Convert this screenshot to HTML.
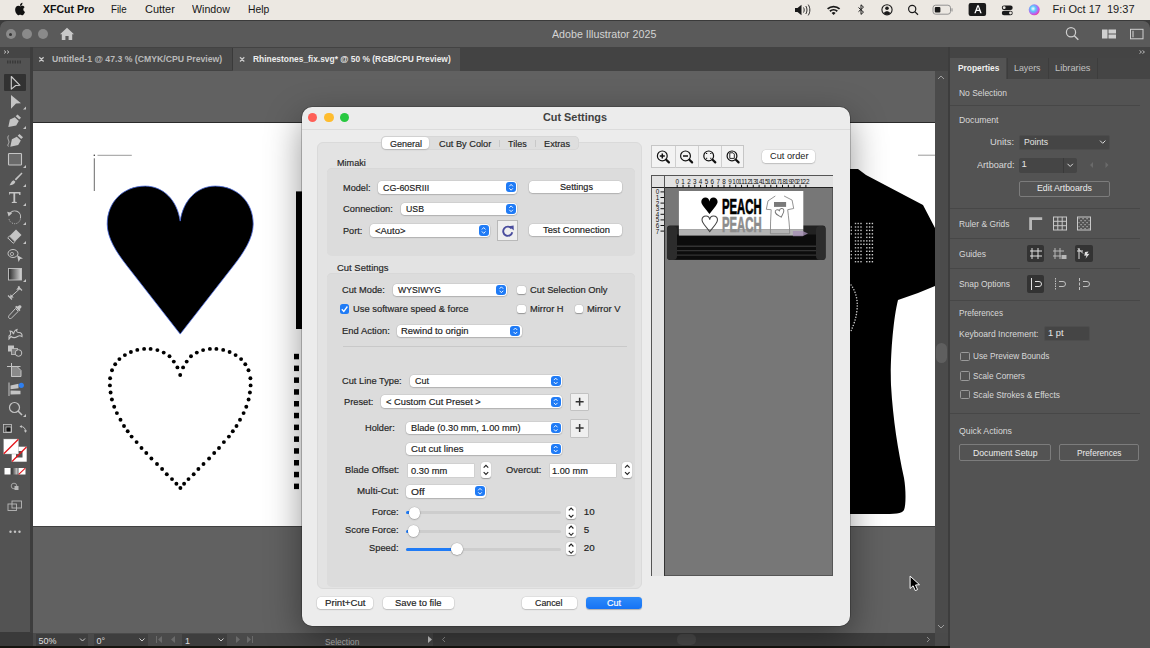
<!DOCTYPE html>
<html><head><meta charset="utf-8"><style>
.d{-webkit-text-stroke:.18px currentColor}
*{box-sizing:border-box;margin:0;padding:0}
html,body{width:1150px;height:648px;overflow:hidden;background:#3c3c3c;font-family:"Liberation Sans",sans-serif}
.a{position:absolute}
.t{position:absolute;white-space:nowrap}
svg{position:absolute;overflow:visible}
</style></head><body>
<div class="a" style="left:0px;top:0px;width:1150px;height:20px;background:#ece8e2"></div>
<svg style="left:15px;top:2.8px" width="11" height="12.6" viewBox="0 0 170 200"><path fill="#111" d="M150 68c-1 1-20 12-20 36 0 28 25 38 26 38 0 1-4 14-13 27-8 12-17 24-30 24s-17-8-32-8c-15 0-20 8-32 8s-21-12-30-25C8 152 0 126 0 102c0-39 25-60 50-60 13 0 24 9 32 9 8 0 20-9 35-9 6 0 26 1 33 26zM106 30c6-8 11-19 11-29 0-2 0-3-1-4-10 0-22 7-29 15-6 7-11 17-11 28 0 1 0 3 1 3 1 0 2 1 3 1 9 0 20-6 26-14z"/></svg>
<div class="t" style="left:42.7px;top:4.19px;font-size:11px;line-height:11px;color:#111;font-weight:bold;transform:scaleX(0.9577);transform-origin:0 0;">XFCut Pro</div>
<div class="t" style="left:111.3px;top:4.19px;font-size:11px;line-height:11px;color:#151515;transform:scaleX(0.8858);transform-origin:0 0;">File</div>
<div class="t" style="left:145px;top:4.19px;font-size:11px;line-height:11px;color:#151515;transform:scaleX(0.9949);transform-origin:0 0;">Cutter</div>
<div class="t" style="left:192.2px;top:4.19px;font-size:11px;line-height:11px;color:#151515;transform:scaleX(0.9662);transform-origin:0 0;">Window</div>
<div class="t" style="left:247.5px;top:4.19px;font-size:11px;line-height:11px;color:#151515;transform:scaleX(0.9371);transform-origin:0 0;">Help</div>
<div class="t" style="left:1052.6px;top:4.19px;font-size:11px;line-height:11px;color:#1a1a1a;white-space:pre;">Fri Oct 17  19:37</div>
<svg style="left:0;top:0" width="1150" height="20">
<g fill="#1a1a1a">
<path d="M795 8h2.5l4-3.2v10.4l-4-3.2H795z"/>
<path d="M803.5 7.5c.9 1.5.9 3.5 0 5M805.8 6c1.6 2.4 1.6 5.6 0 8M808.2 4.6c2.2 3.3 2.2 7.5 0 10.8" fill="none" stroke="#1a1a1a" stroke-width=".9"/>
<path d="M827 8.3a9.5 9.5 0 0 1 13.2 0l-1.2 1.3a7.8 7.8 0 0 0-10.8 0zM829.3 10.6a6.3 6.3 0 0 1 8.6 0l-1.2 1.3a4.6 4.6 0 0 0-6.2 0zM831.6 12.9a3 3 0 0 1 4 0l-2 2.1z"/>
<path d="M858.5 7.5l5 4.6-2.5 2.3V4.8l2.5 2.3-5 4.6" fill="none" stroke="#1a1a1a" stroke-width="1"/>
<circle cx="887" cy="9.8" r="5.1" fill="none" stroke="#1a1a1a" stroke-width="1.1"/>
<circle cx="887" cy="8.3" r="1.8"/>
<path d="M883.7 13.3c1-1.5 2-2 3.3-2s2.3.5 3.3 2c-1 .9-2 1.3-3.3 1.3s-2.3-.4-3.3-1.3z"/>
<circle cx="912.2" cy="9" r="3.6" fill="none" stroke="#1a1a1a" stroke-width="1.2"/>
<path d="M914.8 11.6l3.2 3.2" stroke="#1a1a1a" stroke-width="1.3"/>
<rect x="933" y="5.2" width="17.5" height="9" rx="2.6" fill="none" stroke="#888" stroke-width=".9"/>
<rect x="934.8" y="7" width="5.6" height="5.4" rx="1"/>
<path d="M952 8.3v3.2" stroke="#888" stroke-width="1"/>
<rect x="968.6" y="3" width="17.5" height="13" rx="2"/>
<path d="M1004 5.5h6.5a2.2 2.2 0 0 1 0 4.4h-6.5a2.2 2.2 0 0 1 0-4.4zM1004 10.8h6.5a2.2 2.2 0 0 1 0 4.4h-6.5a2.2 2.2 0 0 1 0-4.4z"/>
</g>
<g fill="#ece8e2"><circle cx="1004.2" cy="7.7" r="1.4"/><circle cx="1010.5" cy="13" r="1.4"/></g>
<path d="M974.3 13.3l3-8h1.4l3 8h-1.5l-.8-2.2h-2.9l-.8 2.2zM977 9.8h2.1l-1.05-3z" fill="#fff"/>
<defs><radialGradient id="siri" cx=".4" cy=".4" r=".7"><stop offset="0" stop-color="#fff"/><stop offset=".35" stop-color="#5ac8fa"/><stop offset=".7" stop-color="#bf5af2"/><stop offset="1" stop-color="#ff375f"/></radialGradient></defs>
<circle cx="1034.2" cy="9.8" r="5.5" fill="url(#siri)"/>
</svg>
<div class="a" style="left:0px;top:20px;width:1150px;height:628px;background:#3a3a3a;border-radius:7px 7px 0 0"></div>
<div class="a" style="left:0px;top:21px;width:1150px;height:26px;background:#5a5a5a;border-radius:7px 7px 0 0"></div>
<div class="a" style="left:5.9px;top:29.3px;width:10px;height:10px;border-radius:50%;background:#8a8a8a"></div>
<div class="a" style="left:22px;top:29.3px;width:10px;height:10px;border-radius:50%;background:#8a8a8a"></div>
<div class="a" style="left:37.9px;top:29.3px;width:10px;height:10px;border-radius:50%;background:#8a8a8a"></div>
<div class="a" style="left:9.4px;top:32.8px;width:3px;height:3px;border-radius:50%;background:#353535"></div>
<svg style="left:0;top:0" width="200" height="48"><path d="M60 34.2l7-6.5 7 6.5h-1.8v5.7h-3.6v-3.8h-3.2v3.8h-3.6v-5.7z" fill="#c8c8c8"/></svg>
<div class="t" style="left:551.9px;top:29.5px;font-size:10.4px;line-height:10.4px;color:#d4d4d4;transform:scaleX(1.0261);transform-origin:0 0;">Adobe Illustrator 2025</div>
<svg style="left:0;top:0" width="1150" height="48">
<circle cx="1071" cy="32.3" r="4.6" fill="none" stroke="#cfcfcf" stroke-width="1.2"/>
<path d="M1074.3 35.7l4 4" stroke="#cfcfcf" stroke-width="1.4"/>
<rect x="1102" y="29.5" width="5.5" height="9" fill="#cfcfcf"/>
<rect x="1108.5" y="29.5" width="7.5" height="4" fill="#cfcfcf"/>
<rect x="1108.5" y="34.5" width="7.5" height="4" fill="#cfcfcf"/>
<rect x="1130.5" y="29.3" width="12.5" height="9.5" fill="none" stroke="#cfcfcf" stroke-width="1"/>
<rect x="1132" y="30.8" width="2" height="6.5" fill="#9a9a9a"/>
</svg>
<div class="a" style="left:0px;top:47px;width:30px;height:11px;background:#454545"></div>
<div class="a" style="left:0px;top:58px;width:30px;height:574px;background:#535353"></div>
<div class="a" style="left:30px;top:47px;width:2.5px;height:586px;background:#3d3d3d"></div>
<svg style="left:0;top:0" width="32" height="648" viewBox="0 0 32 648">
<g fill="none" stroke="#4e4e4e"></g>
<!-- grip -->
<g fill="#3a3a3a"><rect x="7" y="60.5" width="1.5" height="3"/><rect x="9.5" y="60.5" width="1.5" height="3"/><rect x="12" y="60.5" width="1.5" height="3"/><rect x="14.5" y="60.5" width="1.5" height="3"/><rect x="17" y="60.5" width="1.5" height="3"/><rect x="19.5" y="60.5" width="1.5" height="3"/></g>
<path d="M4 50.5l2 1.5-2 1.5M7 50.5l2 1.5-2 1.5" stroke="#bdbdbd" stroke-width=".9" fill="none"/>
<rect x="4" y="74" width="22" height="17" rx="1" fill="#323232"/>
<path d="M11.3 76.5L20 85.3l-4.3.2-4.4 3.6z" fill="none" stroke="#cfcfcf" stroke-width="1.1" stroke-linejoin="round"/>
<g fill="#c4c4c4">
<path d="M11 95l10 8.2-5 .4-5 5.2z"/>
<path d="M26 106.5v3h-3z"/>
<!-- pen -->
<path d="M17.5 114.5l3.5 3.2-1.8 1.8-3.5-3.2z"/>
<path d="M14.8 117.2l4 3.7-2.6 4.7L8.3 127l1.6-7.5z"/>
<path d="M26 126v3h-3z"/>
<!-- curvature pen -->
<path d="M19.5 134l3.5 3.2-1.8 1.8-3.5-3.2z"/>
<path d="M16.8 136.7l4 3.7-2.6 4.7-7.9 1.6 1.6-7.5z"/>
<path d="M8.6 135.5c-2 3 .8 4.8.3 7-.3 1.7-1.8 2.5-.5 4" fill="none" stroke="#c4c4c4" stroke-width=".9"/>
<!-- rect -->
<rect x="8.5" y="153.5" width="13" height="11.5" rx=".8" fill="#6a6a6a" stroke="#c4c4c4" stroke-width="1.1"/>
<path d="M26 165v3h-3z"/>
<!-- brush -->
<path d="M21.5 172.5l1 1-6.5 7-1.3-1.2z"/>
<path d="M13.8 180.2l1.6 1.5c-.8 2.2-2.5 3.3-6 3.5 1.6-1.3 1.4-4 4.4-5z"/>
<path d="M26 184v3h-3z"/>
<!-- Type -->
<path d="M9 192h11.5v3h-1.2l-.5-1.6h-3.6v8.3l1.6.4v.9h-5v-.9l1.6-.4v-8.3h-3.6l-.5 1.6H9z"/>
<path d="M26 203v3h-3z"/>
<!-- rotate -->
<path d="M9.6 214.2A5.8 5.8 0 0 1 20.4 218.3" fill="none" stroke="#c4c4c4" stroke-width="1.1"/>
<path d="M20.3 219.5A5.8 5.8 0 0 1 9 218.8" fill="none" stroke="#c4c4c4" stroke-width="1" stroke-dasharray="1 1.3"/>
<path d="M7.2 211.8l5 1.2-3.6 3.6z"/>
<path d="M26 222v3h-3z"/>
<!-- eraser -->
<path d="M16 229.5l5.5 5.5-6.5 6.5-5.5-5.5z"/>
<path d="M9.5 236l5.5 5.5-1.8 1.8-5.5-5.5z" fill="none" stroke="#c4c4c4" stroke-width="1"/>
<path d="M26 241v3h-3z"/>
<!-- shape builder -->
<ellipse cx="13" cy="253.5" rx="5" ry="4" fill="none" stroke="#c4c4c4" stroke-width="1"/>
<circle cx="12" cy="254" r="1.6" fill="none" stroke="#c4c4c4" stroke-width=".8"/>
<path d="M17 255l6 3.5-2.8.6-1.7 3z"/>
<!-- gradient -->
<defs><linearGradient id="gr" x1="0" x2="1"><stop offset="0" stop-color="#2a2a2a"/><stop offset="1" stop-color="#d8d8d8"/></linearGradient></defs>
<rect x="8.5" y="268.5" width="13" height="11.5" fill="url(#gr)" stroke="#c4c4c4" stroke-width=".9"/>
<path d="M26 279v3h-3z"/>
<!-- width tool -->
<path d="M10 297.5l10-9" stroke="#c4c4c4" stroke-width="1" fill="none"/>
<path d="M8 295.5l4 4M18 286.5l4 4" stroke="#c4c4c4" stroke-width="1.1" fill="none"/>
<path d="M10.5 294.2l-.3 3.6 3.6-.3zM19.5 285.8l.3 3.6-3.6.3z"/>
<!-- eyedropper -->
<path d="M19 305.5c1.5-1 3.2.6 2.2 2.2l-1.5 1.5.8.8-1.2 1.2-4.2-4.2 1.2-1.2.8.8z"/>
<path d="M15.5 308.5l2.8 2.8-6.6 6.6c-.8.8-2 .9-2.7.2s-.6-1.9.2-2.7z" fill="none" stroke="#c4c4c4" stroke-width="1"/>
<!-- puppet warp -->
<path d="M9 336c2-1 2-3 1-5 2 0 3 1 3.5 3 .5-2 1-4 3.5-4.5-1 2 0 3 2 3 2 0 3.5 1.5 3 4-1.5-1-3-1-4.5 0-2 1.3-4.5 1.5-6.5 0-1 1-1.5 2-2 2.5z" fill="none" stroke="#c4c4c4" stroke-width="1.1"/>
<!-- blend -->
<rect x="8" y="345.5" width="6" height="6" />
<rect x="11.5" y="348.5" width="6" height="6" fill="#7a7a7a" stroke="#c4c4c4" stroke-width=".8"/>
<circle cx="18.5" cy="353" r="3.3" fill="#535353" stroke="#c4c4c4" stroke-width="1"/>
<!-- artboard -->
<path d="M11.5 363v13.5M7 366.5h13.5" stroke="#c4c4c4" stroke-width="1" fill="none"/>
<path d="M11.5 366.5h5.5l4 4v6H11.5z" fill="#8a8a8a" stroke="#c4c4c4" stroke-width="1"/>
<!-- graph -->
<path d="M9 382.5v13.5" stroke="#c4c4c4" stroke-width="1" fill="none"/>
<path d="M10.5 385.5l8-1.8v4.5l-8 1z M10.5 390.5l10 .3v3.5l-10 .3z"/>
<circle cx="21.3" cy="385.3" r="2.6" fill="#2e7ff0"/>
<!-- zoom -->
<circle cx="14.5" cy="407.5" r="5" fill="none" stroke="#c4c4c4" stroke-width="1.2"/>
<path d="M18 411l4 4" stroke="#c4c4c4" stroke-width="1.6"/>
<path d="M26 414v3h-3z"/>
<!-- swap small -->
<rect x="3.5" y="424.5" width="8" height="8" fill="none" stroke="#c4c4c4" stroke-width=".8"/>
<rect x="6" y="427" width="5" height="5" fill="#111" stroke="#e0e0e0" stroke-width=".6"/>
<path d="M20.5 426.5c3 0 5 1.5 5 5" fill="none" stroke="#c4c4c4" stroke-width="1"/>
<path d="M19.5 426.5l2.2-1.6v3.2zM25.5 432.8l-1.6-2.2h3.2z"/>
</g>
<!-- fill / stroke -->
<rect x="11.7" y="446.7" width="15" height="15" fill="#fff"/>
<rect x="16" y="451" width="6.5" height="6.5" fill="#555"/>
<path d="M12 461.5l14.5-14.5" stroke="#e4141a" stroke-width="1.3"/>
<rect x="3.6" y="439" width="15" height="15" fill="#fff" stroke="#9a9a9a" stroke-width=".4"/>
<path d="M3.8 453.8l14.6-14.6" stroke="#e4141a" stroke-width="1.3"/>
<rect x="4.5" y="468" width="6" height="6.5" fill="#fff"/>
<rect x="11.5" y="468" width="6" height="6.5" fill="url(#gr)"/>
<rect x="18.5" y="468" width="7" height="6.5" fill="#fff"/>
<path d="M18.7 474.3l6.6-6.2" stroke="#e4141a" stroke-width="1.1"/>
<g fill="#b8b8b8"><circle cx="14" cy="486" r="2.8" fill="none" stroke="#b8b8b8" stroke-width=".8"/><rect x="14.5" y="486" width="4" height="4"/></g>
<g fill="none" stroke="#b8b8b8" stroke-width=".9"><rect x="8" y="504" width="8.5" height="6.5"/><rect x="12" y="501" width="9.5" height="7"/></g>
<g fill="#c4c4c4"><circle cx="10.5" cy="531.8" r="1.2"/><circle cx="15" cy="531.8" r="1.2"/><circle cx="19.5" cy="531.8" r="1.2"/></g>
</svg>

<div class="a" style="left:32.5px;top:47px;width:916px;height:23.5px;background:#434343"></div>
<div class="a" style="left:33px;top:48px;width:199.5px;height:22px;background:#494949"></div>
<div class="a" style="left:232.4px;top:48px;width:1px;height:22px;background:#3a3a3a"></div>
<div class="a" style="left:233.4px;top:48px;width:226.2px;height:22.5px;background:#535353"></div>
<svg style="left:0;top:0" width="480" height="72"><path d="M39.3 57.2l4.3 4.3m0-4.3l-4.3 4.3M240 57.2l4.3 4.3m0-4.3l-4.3 4.3" stroke="#c8c8c8" stroke-width="1.25"/></svg>
<div class="t" style="left:51.7px;top:54.17px;font-size:9.6px;line-height:9.6px;color:#bababa;font-weight:bold;transform:scaleX(0.9056);transform-origin:0 0;">Untitled-1 @ 47.3 % (CMYK/CPU Preview)</div>
<div class="t" style="left:252.8px;top:54.17px;font-size:9.6px;line-height:9.6px;color:#ececec;font-weight:bold;transform:scaleX(0.8754);transform-origin:0 0;">Rhinestones_fix.svg* @ 50 % (RGB/CPU Preview)</div>
<div class="a" style="left:32.5px;top:70.5px;width:903px;height:1px;background:#3c3c3c"></div>
<div class="a" style="left:32.5px;top:71px;width:902.5px;height:562px;background:#616161"></div>
<div class="a" style="left:33px;top:121.8px;width:902px;height:1px;background:#2a2a2a"></div>
<div class="a" style="left:33px;top:122.8px;width:902px;height:402.9px;background:#ffffff"></div>
<div class="a" style="left:33px;top:525.7px;width:902px;height:1.8px;background:#404040"></div>
<div class="a" style="left:935px;top:70.5px;width:13px;height:562.5px;background:#4b4b4b"></div>
<svg style="left:0;top:0" width="1150" height="648"><path d="M938 79l3-3 3 3" fill="none" stroke="#aaa" stroke-width=".9"/><path d="M938 625l3 3 3-3" fill="none" stroke="#aaa" stroke-width=".9"/></svg>
<div class="a" style="left:936px;top:343.3px;width:11.3px;height:19.7px;background:#5f5f5f;border-radius:5.5px"></div>
<div class="a" style="left:948px;top:47px;width:2px;height:601px;background:#3d3d3d"></div>
<svg style="left:0;top:0" width="1150" height="648">
<path d="M97.5 155.3h34.3" stroke="#9a9a9a" stroke-width="1"/>
<path d="M94.3 158.3V191" stroke="#6a6a6a" stroke-width="1"/>
<circle cx="94.3" cy="155.3" r=".8" fill="#333"/>
<path d="M918 155.2h17" stroke="#9a9a9a" stroke-width="1"/>
<g transform="translate(107.2,186.1)">
<path d="M73 35C70 14 56 0 38 0C16 0 0 16 0 38C0 52 9.4 66.4 20 80L73 148L126 80C136.6 66.4 146 52 146 38C146 16 130 0 108 0C90 0 76 14 73 35Z" fill="#000" stroke="#4a6be0" stroke-width=".8"/>
</g>
<g fill="#000"><circle cx="180.2" cy="375.0" r="1.95"/><circle cx="177.4" cy="367.4" r="1.95"/><circle cx="173.8" cy="361.6" r="1.95"/><circle cx="169.5" cy="356.3" r="1.95"/><circle cx="163.7" cy="352.6" r="1.95"/><circle cx="157.4" cy="350.1" r="1.95"/><circle cx="150.6" cy="348.9" r="1.95"/><circle cx="144.1" cy="348.9" r="1.95"/><circle cx="137.3" cy="349.9" r="1.95"/><circle cx="130.9" cy="352.0" r="1.95"/><circle cx="124.9" cy="355.1" r="1.95"/><circle cx="119.4" cy="359.1" r="1.95"/><circle cx="115.2" cy="364.3" r="1.95"/><circle cx="112.0" cy="370.2" r="1.95"/><circle cx="110.1" cy="378.3" r="1.95"/><circle cx="109.9" cy="385.4" r="1.95"/><circle cx="110.6" cy="392.5" r="1.95"/><circle cx="111.9" cy="399.5" r="1.95"/><circle cx="114.2" cy="406.7" r="1.95"/><circle cx="116.9" cy="413.1" r="1.95"/><circle cx="120.5" cy="419.8" r="1.95"/><circle cx="124.0" cy="426.0" r="1.95"/><circle cx="127.7" cy="431.2" r="1.95"/><circle cx="131.6" cy="436.6" r="1.95"/><circle cx="136.6" cy="442.1" r="1.95"/><circle cx="141.5" cy="448.0" r="1.95"/><circle cx="146.3" cy="453.0" r="1.95"/><circle cx="151.4" cy="458.5" r="1.95"/><circle cx="157.0" cy="464.0" r="1.95"/><circle cx="162.1" cy="469.0" r="1.95"/><circle cx="166.8" cy="474.3" r="1.95"/><circle cx="172.0" cy="479.1" r="1.95"/><circle cx="176.4" cy="483.7" r="1.95"/><circle cx="180.4" cy="488.0" r="1.95"/><circle cx="183.1" cy="367.4" r="1.95"/><circle cx="186.7" cy="361.6" r="1.95"/><circle cx="191.0" cy="356.3" r="1.95"/><circle cx="196.8" cy="352.6" r="1.95"/><circle cx="203.1" cy="350.1" r="1.95"/><circle cx="209.9" cy="348.9" r="1.95"/><circle cx="216.4" cy="348.9" r="1.95"/><circle cx="223.2" cy="349.9" r="1.95"/><circle cx="229.6" cy="352.0" r="1.95"/><circle cx="235.6" cy="355.1" r="1.95"/><circle cx="241.1" cy="359.1" r="1.95"/><circle cx="245.3" cy="364.3" r="1.95"/><circle cx="248.5" cy="370.2" r="1.95"/><circle cx="250.4" cy="378.3" r="1.95"/><circle cx="250.6" cy="385.4" r="1.95"/><circle cx="249.9" cy="392.5" r="1.95"/><circle cx="248.6" cy="399.5" r="1.95"/><circle cx="246.3" cy="406.7" r="1.95"/><circle cx="243.6" cy="413.1" r="1.95"/><circle cx="240.0" cy="419.8" r="1.95"/><circle cx="236.5" cy="426.0" r="1.95"/><circle cx="232.8" cy="431.2" r="1.95"/><circle cx="228.9" cy="436.6" r="1.95"/><circle cx="223.9" cy="442.1" r="1.95"/><circle cx="219.0" cy="448.0" r="1.95"/><circle cx="214.2" cy="453.0" r="1.95"/><circle cx="209.1" cy="458.5" r="1.95"/><circle cx="203.5" cy="464.0" r="1.95"/><circle cx="198.4" cy="469.0" r="1.95"/><circle cx="193.7" cy="474.3" r="1.95"/><circle cx="188.5" cy="479.1" r="1.95"/><circle cx="184.1" cy="483.7" r="1.95"/></g>
<rect x="296" y="191.4" width="6" height="137.6" fill="#000"/>
<g fill="#000"><rect x="294" y="353.8" width="5" height="5.5"/><rect x="294" y="365.6" width="5" height="5.5"/><rect x="294" y="377.4" width="5" height="5.5"/><rect x="294" y="389.2" width="5" height="5.5"/><rect x="294" y="401.0" width="5" height="5.5"/><rect x="294" y="412.8" width="5" height="5.5"/><rect x="294" y="424.6" width="5" height="5.5"/><rect x="294" y="436.4" width="5" height="5.5"/><rect x="294" y="448.2" width="5" height="5.5"/><rect x="294" y="460.0" width="5" height="5.5"/><rect x="294" y="471.8" width="5" height="5.5"/><rect x="294" y="483.6" width="5" height="5.5"/></g>
<path d="M850 169L858 169L866 175L923 205L935 228L935 286L918 293L898 300C893 320 890 360 891 385C893 420 898 450 904 478C906 490 906 505 904 510C902 514 895 514 880 514L850 514Z" fill="#000"/>
</svg>
<svg style="left:0;top:0" width="1150" height="648"><g fill="#ddd"><rect x="854.8" y="222.8" width="1.4" height="1.4"/><rect x="857.5" y="222.8" width="1.4" height="1.4"/><rect x="860.3" y="222.8" width="1.4" height="1.4"/><rect x="866.1" y="222.8" width="1.4" height="1.4"/><rect x="868.9" y="222.8" width="1.4" height="1.4"/><rect x="871.7" y="222.8" width="1.4" height="1.4"/><rect x="854.8" y="226.3" width="1.4" height="1.4"/><rect x="857.5" y="226.3" width="1.4" height="1.4"/><rect x="860.3" y="226.3" width="1.4" height="1.4"/><rect x="866.1" y="226.3" width="1.4" height="1.4"/><rect x="868.9" y="226.3" width="1.4" height="1.4"/><rect x="871.7" y="226.3" width="1.4" height="1.4"/><rect x="850.6" y="226.3" width="1.4" height="1.4"/><rect x="854.8" y="229.7" width="1.4" height="1.4"/><rect x="857.5" y="229.7" width="1.4" height="1.4"/><rect x="860.3" y="229.7" width="1.4" height="1.4"/><rect x="866.1" y="229.7" width="1.4" height="1.4"/><rect x="868.9" y="229.7" width="1.4" height="1.4"/><rect x="871.7" y="229.7" width="1.4" height="1.4"/><rect x="850.6" y="229.7" width="1.4" height="1.4"/><rect x="854.8" y="233.2" width="1.4" height="1.4"/><rect x="857.5" y="233.2" width="1.4" height="1.4"/><rect x="860.3" y="233.2" width="1.4" height="1.4"/><rect x="866.1" y="233.2" width="1.4" height="1.4"/><rect x="868.9" y="233.2" width="1.4" height="1.4"/><rect x="871.7" y="233.2" width="1.4" height="1.4"/><rect x="850.6" y="233.2" width="1.4" height="1.4"/><rect x="854.8" y="236.7" width="1.4" height="1.4"/><rect x="857.5" y="236.7" width="1.4" height="1.4"/><rect x="860.3" y="236.7" width="1.4" height="1.4"/><rect x="866.1" y="236.7" width="1.4" height="1.4"/><rect x="868.9" y="236.7" width="1.4" height="1.4"/><rect x="871.7" y="236.7" width="1.4" height="1.4"/><rect x="854.8" y="240.2" width="1.4" height="1.4"/><rect x="857.5" y="240.2" width="1.4" height="1.4"/><rect x="860.3" y="240.2" width="1.4" height="1.4"/><rect x="866.1" y="240.2" width="1.4" height="1.4"/><rect x="868.9" y="240.2" width="1.4" height="1.4"/><rect x="871.7" y="240.2" width="1.4" height="1.4"/><rect x="863.2" y="240.2" width="1.4" height="1.4"/><rect x="854.8" y="243.6" width="1.4" height="1.4"/><rect x="857.5" y="243.6" width="1.4" height="1.4"/><rect x="860.3" y="243.6" width="1.4" height="1.4"/><rect x="866.1" y="243.6" width="1.4" height="1.4"/><rect x="868.9" y="243.6" width="1.4" height="1.4"/><rect x="871.7" y="243.6" width="1.4" height="1.4"/><rect x="863.2" y="243.6" width="1.4" height="1.4"/><rect x="854.8" y="247.1" width="1.4" height="1.4"/><rect x="857.5" y="247.1" width="1.4" height="1.4"/><rect x="860.3" y="247.1" width="1.4" height="1.4"/><rect x="866.1" y="247.1" width="1.4" height="1.4"/><rect x="868.9" y="247.1" width="1.4" height="1.4"/><rect x="871.7" y="247.1" width="1.4" height="1.4"/><rect x="854.8" y="250.6" width="1.4" height="1.4"/><rect x="857.5" y="250.6" width="1.4" height="1.4"/><rect x="860.3" y="250.6" width="1.4" height="1.4"/><rect x="866.1" y="250.6" width="1.4" height="1.4"/><rect x="868.9" y="250.6" width="1.4" height="1.4"/><rect x="871.7" y="250.6" width="1.4" height="1.4"/><rect x="850.6" y="250.6" width="1.4" height="1.4"/><rect x="854.8" y="254.0" width="1.4" height="1.4"/><rect x="857.5" y="254.0" width="1.4" height="1.4"/><rect x="860.3" y="254.0" width="1.4" height="1.4"/><rect x="866.1" y="254.0" width="1.4" height="1.4"/><rect x="868.9" y="254.0" width="1.4" height="1.4"/><rect x="871.7" y="254.0" width="1.4" height="1.4"/><rect x="850.6" y="254.0" width="1.4" height="1.4"/><rect x="854.8" y="257.5" width="1.4" height="1.4"/><rect x="857.5" y="257.5" width="1.4" height="1.4"/><rect x="860.3" y="257.5" width="1.4" height="1.4"/><rect x="866.1" y="257.5" width="1.4" height="1.4"/><rect x="868.9" y="257.5" width="1.4" height="1.4"/><rect x="871.7" y="257.5" width="1.4" height="1.4"/><rect x="850.6" y="257.5" width="1.4" height="1.4"/><rect x="854.8" y="261.0" width="1.4" height="1.4"/><rect x="857.5" y="261.0" width="1.4" height="1.4"/><rect x="860.3" y="261.0" width="1.4" height="1.4"/><rect x="866.1" y="261.0" width="1.4" height="1.4"/><rect x="868.9" y="261.0" width="1.4" height="1.4"/><rect x="871.7" y="261.0" width="1.4" height="1.4"/></g><path d="M851 285C856 292 858 300 857 310C856 320 853 326 851 331" fill="none" stroke="#eee" stroke-width="1.6" stroke-dasharray="0 2.8" stroke-linecap="round"/></svg>
<div class="a" style="left:32.5px;top:633px;width:903px;height:13px;background:#4a4a4a"></div>
<div class="a" style="left:36px;top:634px;width:40px;height:11.5px;background:#3e3e3e"></div>
<div class="a" style="left:76px;top:634px;width:12px;height:11.5px;background:#3e3e3e"></div>
<div class="a" style="left:94px;top:634px;width:40px;height:11.5px;background:#3e3e3e"></div>
<div class="a" style="left:134px;top:634px;width:14px;height:11.5px;background:#3e3e3e"></div>
<div class="a" style="left:182px;top:634px;width:33px;height:11.5px;background:#3e3e3e"></div>
<div class="a" style="left:215px;top:634px;width:12px;height:11.5px;background:#3e3e3e"></div>
<div class="a" style="left:433px;top:633px;width:502px;height:13px;background:#3f3f3f"></div>
<div class="a" style="left:677px;top:634px;width:19.4px;height:10.6px;background:#4e4e4e;border-radius:5px"></div>
<div class="a" style="left:935px;top:633px;width:13px;height:13px;background:#4a4a4a"></div>
<div class="t" style="left:38.5px;top:636.88px;font-size:9px;line-height:9px;color:#dedede;">50%</div>
<div class="t" style="left:96.5px;top:636.88px;font-size:9px;line-height:9px;color:#dedede;">0°</div>
<div class="t" style="left:185px;top:636.88px;font-size:9px;line-height:9px;color:#dedede;">1</div>
<div class="t" style="left:324.6px;top:636.54px;font-size:9.4px;line-height:9.4px;color:#b8b8b8;transform:scaleX(0.8896);transform-origin:0 0;">Selection</div>
<svg style="left:0;top:0" width="1150" height="648"><g fill="none" stroke="#cfcfcf" stroke-width="1">
<path d="M80 638.5l2.5 2.5 2.5-2.5M139.5 638.5l2.5 2.5 2.5-2.5M218.5 638.5l2.5 2.5 2.5-2.5"/></g>
<g fill="#6a6a6a"><rect x="156" y="636" width="1" height="7"/><path d="M162 636v7l-4-3.5zM175 636v7l-4-3.5zM236 636v7l4-3.5zM247 636v7l4-3.5"/><rect x="252" y="636" width="1" height="7"/></g>
<path d="M428 636v7l4-3.5z" fill="#cfcfcf"/>
<path d="M445 637l-2.5 2.5 2.5 2.5M927 637l2.5 2.5-2.5 2.5" fill="none" stroke="#999" stroke-width=".9"/>
</svg>
<div class="a" style="left:0px;top:645.5px;width:1150px;height:2.5px;background:#15140f"></div>
<div class="a" style="left:950px;top:47px;width:199.5px;height:11px;background:#444444"></div>
<div class="a" style="left:950px;top:58px;width:199.5px;height:590px;background:#535353"></div>
<div class="a" style="left:950px;top:58px;width:199.5px;height:21px;background:#454545"></div>
<div class="a" style="left:950px;top:58px;width:56px;height:21px;background:#535353"></div>
<div class="a" style="left:1006.5px;top:58px;width:1px;height:21px;background:#3d3d3d"></div>
<div class="a" style="left:1047.8px;top:58px;width:1px;height:21px;background:#3d3d3d"></div>
<div class="a" style="left:1097.4px;top:58px;width:1px;height:21px;background:#3d3d3d"></div>
<svg style="left:0;top:0" width="1150" height="60"><path d="M1139.5 50.5l2 1.5-2 1.5M1142.5 50.5l2 1.5-2 1.5" stroke="#bdbdbd" stroke-width=".9" fill="none"/></svg>
<div class="t" style="left:957.8px;top:62.8px;font-size:9.8px;line-height:9.8px;color:#efefef;font-weight:bold;transform:scaleX(0.8541);transform-origin:0 0;">Properties</div>
<div class="t" style="left:1013.5px;top:62.8px;font-size:9.8px;line-height:9.8px;color:#c0c0c0;transform:scaleX(0.9010);transform-origin:0 0;">Layers</div>
<div class="t" style="left:1055px;top:62.8px;font-size:9.8px;line-height:9.8px;color:#c0c0c0;transform:scaleX(0.9447);transform-origin:0 0;">Libraries</div>
<div class="t" style="left:958.5px;top:87.7px;font-size:9.8px;line-height:9.8px;color:#d8d8d8;transform:scaleX(0.8639);transform-origin:0 0;">No Selection</div>
<div class="a" style="left:950px;top:105px;width:190px;height:1px;background:#474747"></div>
<div class="t" style="left:958.5px;top:114.9px;font-size:9.8px;line-height:9.8px;color:#d8d8d8;transform:scaleX(0.8844);transform-origin:0 0;">Document</div>
<div class="t" style="left:990px;top:137px;font-size:9.8px;line-height:9.8px;color:#d8d8d8;transform:scaleX(0.9581);transform-origin:0 0;">Units:</div>
<div class="a" style="left:1018.8px;top:134.8px;width:91.1px;height:14.8px;background:#454545;border:1px solid #4c4c4c;border-radius:2px"></div>
<div class="t" style="left:1024px;top:137px;font-size:9.8px;line-height:9.8px;color:#e4e4e4;transform:scaleX(0.8812);transform-origin:0 0;">Points</div>
<div class="t" style="left:976.5px;top:159.8px;font-size:9.8px;line-height:9.8px;color:#d8d8d8;transform:scaleX(0.9304);transform-origin:0 0;">Artboard:</div>
<div class="a" style="left:1018.8px;top:158px;width:44px;height:14.8px;background:#454545;border-radius:2px 0 0 2px"></div>
<div class="a" style="left:1063px;top:158px;width:14.4px;height:14.8px;background:#454545;border-left:1px solid #3a3a3a;border-radius:0 2px 2px 0"></div>
<div class="t" style="left:1021.5px;top:159.26px;font-size:9.5px;line-height:9.5px;color:#e4e4e4;">1</div>
<div class="a" style="left:1018.8px;top:180.5px;width:91.1px;height:16.1px;border:1px solid #7c7c7c;border-radius:2px"></div>
<div class="t" style="left:1036.5px;top:183.3px;font-size:9.8px;line-height:9.8px;color:#ececec;transform:scaleX(0.8935);transform-origin:0 0;">Edit Artboards</div>
<svg style="left:0;top:0" width="1150" height="648">
<g fill="none" stroke="#dcdcdc" stroke-width="1">
<path d="M1100 140.6l2.7 2.7 2.7-2.7M1067.5 163.8l2.7 2.7 2.7-2.7"/>
</g>
<g fill="#6a6a6a"><path d="M1093 162v6l-3-3zM1105.5 162v6l3-3z"/></g>
</svg>
<div class="a" style="left:950px;top:208.3px;width:190px;height:1px;background:#474747"></div>
<div class="t" style="left:958.5px;top:218.5px;font-size:9.8px;line-height:9.8px;color:#d8d8d8;transform:scaleX(0.8587);transform-origin:0 0;">Ruler &amp; Grids</div>
<svg style="left:0;top:0" width="1150" height="648">
<g fill="none" stroke="#c8c8c8" stroke-width="1">

<rect x="1053.5" y="217" width="13" height="13"/><path d="M1057.8 217v13M1062.2 217v13M1053.5 221.3h13M1053.5 225.7h13"/>
<rect x="1077.5" y="217" width="13" height="13"/>
</g>
<g fill="#9a9a9a"><path fill="#b8b8b8" d="M1029.2 217.3h13v2.8h-10.2v9.8h-2.8z"/><rect x="1078.5" y="218.0" width="1.2" height="1.2"/><rect x="1080.5" y="220.0" width="1.2" height="1.2"/><rect x="1078.5" y="222.0" width="1.2" height="1.2"/><rect x="1080.5" y="224.0" width="1.2" height="1.2"/><rect x="1078.5" y="226.0" width="1.2" height="1.2"/><rect x="1080.5" y="228.0" width="1.2" height="1.2"/><rect x="1082.5" y="218.0" width="1.2" height="1.2"/><rect x="1080.5" y="220.0" width="1.2" height="1.2"/><rect x="1082.5" y="222.0" width="1.2" height="1.2"/><rect x="1080.5" y="224.0" width="1.2" height="1.2"/><rect x="1082.5" y="226.0" width="1.2" height="1.2"/><rect x="1080.5" y="228.0" width="1.2" height="1.2"/><rect x="1082.5" y="218.0" width="1.2" height="1.2"/><rect x="1084.5" y="220.0" width="1.2" height="1.2"/><rect x="1082.5" y="222.0" width="1.2" height="1.2"/><rect x="1084.5" y="224.0" width="1.2" height="1.2"/><rect x="1082.5" y="226.0" width="1.2" height="1.2"/><rect x="1084.5" y="228.0" width="1.2" height="1.2"/><rect x="1086.5" y="218.0" width="1.2" height="1.2"/><rect x="1084.5" y="220.0" width="1.2" height="1.2"/><rect x="1086.5" y="222.0" width="1.2" height="1.2"/><rect x="1084.5" y="224.0" width="1.2" height="1.2"/><rect x="1086.5" y="226.0" width="1.2" height="1.2"/><rect x="1084.5" y="228.0" width="1.2" height="1.2"/><rect x="1086.5" y="218.0" width="1.2" height="1.2"/><rect x="1088.5" y="220.0" width="1.2" height="1.2"/><rect x="1086.5" y="222.0" width="1.2" height="1.2"/><rect x="1088.5" y="224.0" width="1.2" height="1.2"/><rect x="1086.5" y="226.0" width="1.2" height="1.2"/><rect x="1088.5" y="228.0" width="1.2" height="1.2"/></g>
</svg>
<div class="a" style="left:950px;top:238px;width:190px;height:1px;background:#474747"></div>
<div class="t" style="left:958.5px;top:248.5px;font-size:9.8px;line-height:9.8px;color:#d8d8d8;transform:scaleX(0.8696);transform-origin:0 0;">Guides</div>
<div class="a" style="left:1027px;top:244.8px;width:17.4px;height:17.4px;background:#333;border-radius:2px"></div>
<div class="a" style="left:1075px;top:244.8px;width:17.6px;height:17.4px;background:#333;border-radius:2px"></div>
<svg style="left:0;top:0" width="1150" height="648">
<g fill="none" stroke="#e0e0e0" stroke-width="1">
<path d="M1032 248v11M1038 248v11M1030 251h12M1030 256h12"/>
<path d="M1055 248v11M1060 248v11M1053 251h11M1053 256h8" stroke="#b8b8b8"/>
<path d="M1079 248v11M1077 251h6M1078 248.5l5 5"/>
</g>
<rect x="1061.5" y="255" width="5" height="4" fill="#b8b8b8"/>
<path d="M1085 252l3.5-.5-1.5 2.5 2.5-.3-4 5 1-3.2-2.2.3z" fill="#e0e0e0"/>
</svg>
<div class="a" style="left:950px;top:268px;width:190px;height:1px;background:#474747"></div>
<div class="t" style="left:958.5px;top:279px;font-size:9.8px;line-height:9.8px;color:#d8d8d8;transform:scaleX(0.8589);transform-origin:0 0;">Snap Options</div>
<div class="a" style="left:1027px;top:275px;width:17.4px;height:18px;background:#333;border-radius:2px"></div>
<svg style="left:0;top:0" width="1150" height="648">
<g fill="none" stroke="#e0e0e0" stroke-width="1">
<path d="M1031.5 278v12"/><path d="M1035 281.5h4a2.5 2.5 0 0 1 0 5h-4"/>
<path d="M1055.5 278v12" stroke="#c0c0c0" stroke-dasharray="1.5 1"/><path d="M1059 281.5h4a2.5 2.5 0 0 1 0 5h-4" stroke="#c0c0c0"/>
<path d="M1079.5 278v12" stroke="#c0c0c0" stroke-dasharray="3 1.5"/><path d="M1083 281.5h4a2.5 2.5 0 0 1 0 5h-4" stroke="#c0c0c0"/>
</g>
</svg>
<div class="a" style="left:950px;top:299.6px;width:190px;height:1px;background:#474747"></div>
<div class="t" style="left:958.5px;top:308px;font-size:9.8px;line-height:9.8px;color:#d8d8d8;transform:scaleX(0.8328);transform-origin:0 0;">Preferences</div>
<div class="t" style="left:958.5px;top:329px;font-size:9.8px;line-height:9.8px;color:#d8d8d8;transform:scaleX(0.8740);transform-origin:0 0;">Keyboard Increment:</div>
<div class="a" style="left:1043.7px;top:325.5px;width:46.7px;height:15.5px;background:#454545;border:1px solid #4d4d4d;border-radius:2px"></div>
<div class="t" style="left:1047.5px;top:328.26px;font-size:9.5px;line-height:9.5px;color:#e8e8e8;transform:scaleX(0.9783);transform-origin:0 0;">1 pt</div>
<div class="a" style="left:960.4px;top:351.7px;width:9.2px;height:9.2px;border:1px solid #9a9a9a;border-radius:1.5px"></div>
<div class="t" style="left:972.6px;top:351.3px;font-size:9.8px;line-height:9.8px;color:#d8d8d8;transform:scaleX(0.8399);transform-origin:0 0;">Use Preview Bounds</div>
<div class="a" style="left:960.4px;top:371.4px;width:9.2px;height:9.2px;border:1px solid #9a9a9a;border-radius:1.5px"></div>
<div class="t" style="left:972.6px;top:371px;font-size:9.8px;line-height:9.8px;color:#d8d8d8;transform:scaleX(0.8359);transform-origin:0 0;">Scale Corners</div>
<div class="a" style="left:960.4px;top:390.2px;width:9.2px;height:9.2px;border:1px solid #9a9a9a;border-radius:1.5px"></div>
<div class="t" style="left:972.6px;top:389.8px;font-size:9.8px;line-height:9.8px;color:#d8d8d8;transform:scaleX(0.8502);transform-origin:0 0;">Scale Strokes &amp; Effects</div>
<div class="a" style="left:950px;top:412.6px;width:190px;height:1px;background:#474747"></div>
<div class="t" style="left:958.5px;top:426px;font-size:9.8px;line-height:9.8px;color:#d8d8d8;transform:scaleX(0.8927);transform-origin:0 0;">Quick Actions</div>
<div class="a" style="left:958.5px;top:444px;width:92.5px;height:16.7px;border:1px solid #7c7c7c;border-radius:2px"></div>
<div class="a" style="left:1059px;top:444px;width:80px;height:16.7px;border:1px solid #7c7c7c;border-radius:2px"></div>
<div class="t" style="left:972.5px;top:447.5px;font-size:9.8px;line-height:9.8px;color:#ececec;transform:scaleX(0.8836);transform-origin:0 0;">Document Setup</div>
<div class="t" style="left:1077px;top:447.5px;font-size:9.8px;line-height:9.8px;color:#ececec;transform:scaleX(0.8423);transform-origin:0 0;">Preferences</div>
<div class="a" style="left:302px;top:106.5px;width:548px;height:519.5px;background:#ececec;border-radius:10px;box-shadow:0 0 0 .6px rgba(0,0,0,.35),0 12px 36px rgba(0,0,0,.42)"></div>
<div class="a" style="left:302px;top:129px;width:548px;height:1px;background:#dcdcdc"></div>
<div class="a" style="left:307.6px;top:112.6px;width:9.8px;height:9.8px;border-radius:50%;background:#fe5f57"></div>
<div class="a" style="left:323.8px;top:112.6px;width:9.8px;height:9.8px;border-radius:50%;background:#febc2e"></div>
<div class="a" style="left:339.6px;top:112.6px;width:9.8px;height:9.8px;border-radius:50%;background:#28c840"></div>
<div class="t" style="left:543.2px;top:112.43px;font-size:10.6px;line-height:10.6px;color:#404040;font-weight:bold;transform:scaleX(1.0254);transform-origin:0 0;">Cut Settings</div>
<div class="a" style="left:317px;top:142px;width:324.6px;height:447.4px;background:#e3e3e3;border:1px solid #dadada;border-radius:6px"></div>
<div class="a" style="left:380.5px;top:135.8px;width:198.2px;height:14.1px;background:#dedede;border-radius:5px;box-shadow:inset 0 0 0 .5px #d0d0d0"></div>
<div class="a" style="left:381.7px;top:136.5px;width:47.5px;height:12.6px;background:#fff;border-radius:4px;box-shadow:0 .5px 1.5px rgba(0,0,0,.25)"></div>
<div class="a" style="left:499.3px;top:139.5px;width:0.8px;height:7px;background:#c8c8c8"></div>
<div class="a" style="left:535.4px;top:139.5px;width:0.8px;height:7px;background:#c8c8c8"></div>
<div class="t d" style="left:389.5px;top:139.2px;font-size:9.8px;line-height:9.8px;color:#262626;transform:scaleX(0.9208);transform-origin:0 0;">General</div>
<div class="t d" style="left:438.7px;top:139.2px;font-size:9.8px;line-height:9.8px;color:#262626;transform:scaleX(0.9415);transform-origin:0 0;">Cut By Color</div>
<div class="t d" style="left:508.3px;top:139.2px;font-size:9.8px;line-height:9.8px;color:#262626;transform:scaleX(0.9199);transform-origin:0 0;">Tiles</div>
<div class="t d" style="left:543.6px;top:139.2px;font-size:9.8px;line-height:9.8px;color:#262626;transform:scaleX(0.9398);transform-origin:0 0;">Extras</div>
<div class="t d" style="left:336.7px;top:158.1px;font-size:9.8px;line-height:9.8px;color:#262626;transform:scaleX(0.9281);transform-origin:0 0;">Mimaki</div>
<div class="a" style="left:327.3px;top:168.2px;width:307.8px;height:88px;background:#dcdcdc;border-radius:5px;box-shadow:inset 0 .5px 0 #d4d4d4"></div>
<div class="t d" style="left:342.7px;top:182.8px;font-size:9.8px;line-height:9.8px;color:#262626;transform:scaleX(0.9350);transform-origin:0 0;">Model:</div>
<div class="a" style="left:377.9px;top:180.9px;width:139.3px;height:12.8px;background:#fff;border-radius:3.5px;box-shadow:0 .5px 1.2px rgba(0,0,0,.3),0 0 0 .3px rgba(0,0,0,.12)"></div>
<div class="a" style="left:506px;top:182.1px;width:10.2px;height:10.4px;background:#1f7bf6;border-radius:3px"></div>
<svg style="left:0;top:0" width="1150" height="648"><path d="M509.30 186.30l1.8-1.9 1.8 1.9M509.30 188.30l1.8 1.9 1.8-1.9" fill="none" stroke="#fff" stroke-width=".9"/></svg>
<div class="t d" style="left:383.3px;top:182.8px;font-size:9.8px;line-height:9.8px;color:#222;transform:scaleX(0.9122);transform-origin:0 0;">CG-60SRIII</div>
<div class="t d" style="left:342.7px;top:204.2px;font-size:9.8px;line-height:9.8px;color:#262626;transform:scaleX(0.9541);transform-origin:0 0;">Connection:</div>
<div class="a" style="left:400.7px;top:202.5px;width:116.5px;height:12.6px;background:#fff;border-radius:3.5px;box-shadow:0 .5px 1.2px rgba(0,0,0,.3),0 0 0 .3px rgba(0,0,0,.12)"></div>
<div class="a" style="left:506px;top:203.7px;width:10.2px;height:10.2px;background:#1f7bf6;border-radius:3px"></div>
<svg style="left:0;top:0" width="1150" height="648"><path d="M509.30 207.80l1.8-1.9 1.8 1.9M509.30 209.80l1.8 1.9 1.8-1.9" fill="none" stroke="#fff" stroke-width=".9"/></svg>
<div class="t d" style="left:405.5px;top:204.2px;font-size:9.8px;line-height:9.8px;color:#222;transform:scaleX(0.8932);transform-origin:0 0;">USB</div>
<div class="t d" style="left:342.7px;top:226px;font-size:9.8px;line-height:9.8px;color:#262626;transform:scaleX(0.9326);transform-origin:0 0;">Port:</div>
<div class="a" style="left:370.2px;top:224px;width:119.6px;height:12.9px;background:#fff;border-radius:3.5px;box-shadow:0 .5px 1.2px rgba(0,0,0,.3),0 0 0 .3px rgba(0,0,0,.12)"></div>
<div class="a" style="left:478.6px;top:225.2px;width:10.2px;height:10.5px;background:#1f7bf6;border-radius:3px"></div>
<svg style="left:0;top:0" width="1150" height="648"><path d="M481.90 229.45l1.8-1.9 1.8 1.9M481.90 231.45l1.8 1.9 1.8-1.9" fill="none" stroke="#fff" stroke-width=".9"/></svg>
<div class="t d" style="left:375px;top:226px;font-size:9.8px;line-height:9.8px;color:#222;transform:scaleX(0.9650);transform-origin:0 0;">&lt;Auto&gt;</div>
<div class="a" style="left:497.4px;top:220.2px;width:20.6px;height:20.6px;background:#efefef;border:1px solid #b9b9b9"></div>
<svg style="left:0;top:0" width="1150" height="648"><path d="M511.5 228.5a4.6 4.6 0 1 0 .8 3.8" fill="none" stroke="#4a4d9e" stroke-width="1.9"/><path d="M509 226.3l4.6-.8.2 4.9z" fill="#4a4d9e"/></svg>
<div class="a" style="left:529.4px;top:181px;width:92.8px;height:12.1px;background:#fff;border-radius:3.5px;box-shadow:0 .5px 1.2px rgba(0,0,0,.3),0 0 0 .3px rgba(0,0,0,.12)"></div>
<div class="t d" style="left:559.5px;top:182.15px;font-size:9.8px;line-height:9.8px;color:#222;transform:scaleX(0.9320);transform-origin:0 0;">Settings</div>
<div class="a" style="left:529.4px;top:224px;width:92.8px;height:12.2px;background:#fff;border-radius:3.5px;box-shadow:0 .5px 1.2px rgba(0,0,0,.3),0 0 0 .3px rgba(0,0,0,.12)"></div>
<div class="t d" style="left:542.5px;top:225.2px;font-size:9.8px;line-height:9.8px;color:#222;transform:scaleX(0.9535);transform-origin:0 0;">Test Connection</div>
<div class="t d" style="left:336.9px;top:262.7px;font-size:9.8px;line-height:9.8px;color:#262626;transform:scaleX(0.9666);transform-origin:0 0;">Cut Settings</div>
<div class="a" style="left:327.3px;top:273.2px;width:307.8px;height:314px;background:#dcdcdc;border-radius:5px;box-shadow:inset 0 .5px 0 #d4d4d4"></div>
<div class="t d" style="left:341.7px;top:285px;font-size:9.8px;line-height:9.8px;color:#262626;transform:scaleX(0.9468);transform-origin:0 0;">Cut Mode:</div>
<div class="a" style="left:392.9px;top:283.5px;width:114.6px;height:12.5px;background:#fff;border-radius:3.5px;box-shadow:0 .5px 1.2px rgba(0,0,0,.3),0 0 0 .3px rgba(0,0,0,.12)"></div>
<div class="a" style="left:496.3px;top:284.7px;width:10.2px;height:10.1px;background:#1f7bf6;border-radius:3px"></div>
<svg style="left:0;top:0" width="1150" height="648"><path d="M499.60 288.75l1.8-1.9 1.8 1.9M499.60 290.75l1.8 1.9 1.8-1.9" fill="none" stroke="#fff" stroke-width=".9"/></svg>
<div class="t d" style="left:397.5px;top:285px;font-size:9.8px;line-height:9.8px;color:#222;transform:scaleX(0.8874);transform-origin:0 0;">WYSIWYG</div>
<div class="a" style="left:517px;top:285.7px;width:8.7px;height:8.3px;background:#fff;border-radius:2px;box-shadow:0 .4px 1px rgba(0,0,0,.3),0 0 0 .3px rgba(0,0,0,.1)"></div>
<div class="t d" style="left:529.6px;top:285.1px;font-size:9.8px;line-height:9.8px;color:#262626;transform:scaleX(0.9537);transform-origin:0 0;">Cut Selection Only</div>
<div class="a" style="left:339.6px;top:304.3px;width:9.8px;height:9.4px;background:#1f7bf6;border-radius:2.5px"></div>
<svg style="left:0;top:0" width="1150" height="648"><path d="M341.80 309.20l2 2.3 3.6-5" fill="none" stroke="#fff" stroke-width="1.3"/></svg>
<div class="t d" style="left:352.8px;top:303.7px;font-size:9.8px;line-height:9.8px;color:#262626;transform:scaleX(0.9595);transform-origin:0 0;">Use software speed &amp; force</div>
<div class="a" style="left:517px;top:304.7px;width:8.7px;height:8.3px;background:#fff;border-radius:2px;box-shadow:0 .4px 1px rgba(0,0,0,.3),0 0 0 .3px rgba(0,0,0,.1)"></div>
<div class="t d" style="left:529.6px;top:304.2px;font-size:9.8px;line-height:9.8px;color:#262626;transform:scaleX(0.9497);transform-origin:0 0;">Mirror H</div>
<div class="a" style="left:574.7px;top:304.7px;width:8.7px;height:8.3px;background:#fff;border-radius:2px;box-shadow:0 .4px 1px rgba(0,0,0,.3),0 0 0 .3px rgba(0,0,0,.1)"></div>
<div class="t d" style="left:587.2px;top:304.2px;font-size:9.8px;line-height:9.8px;color:#262626;transform:scaleX(0.9587);transform-origin:0 0;">Mirror V</div>
<div class="t d" style="left:341.7px;top:325.6px;font-size:9.8px;line-height:9.8px;color:#262626;transform:scaleX(0.9642);transform-origin:0 0;">End Action:</div>
<div class="a" style="left:397px;top:324.9px;width:124.5px;height:12.1px;background:#fff;border-radius:3.5px;box-shadow:0 .5px 1.2px rgba(0,0,0,.3),0 0 0 .3px rgba(0,0,0,.12)"></div>
<div class="a" style="left:510.3px;top:326.1px;width:10.2px;height:9.7px;background:#1f7bf6;border-radius:3px"></div>
<svg style="left:0;top:0" width="1150" height="648"><path d="M513.60 329.95l1.8-1.9 1.8 1.9M513.60 331.95l1.8 1.9 1.8-1.9" fill="none" stroke="#fff" stroke-width=".9"/></svg>
<div class="t d" style="left:401.2px;top:325.6px;font-size:9.8px;line-height:9.8px;color:#222;transform:scaleX(0.9606);transform-origin:0 0;">Rewind to origin</div>
<div class="a" style="left:342.6px;top:346px;width:284.4px;height:1px;background:#c9c9c9"></div>
<div class="t d" style="left:341.9px;top:376.2px;font-size:9.8px;line-height:9.8px;color:#262626;transform:scaleX(0.9475);transform-origin:0 0;">Cut Line Type:</div>
<div class="a" style="left:409.6px;top:374.7px;width:152.2px;height:12.7px;background:#fff;border-radius:3.5px;box-shadow:0 .5px 1.2px rgba(0,0,0,.3),0 0 0 .3px rgba(0,0,0,.12)"></div>
<div class="a" style="left:550.6px;top:375.9px;width:10.2px;height:10.3px;background:#1f7bf6;border-radius:3px"></div>
<svg style="left:0;top:0" width="1150" height="648"><path d="M553.90 380.05l1.8-1.9 1.8 1.9M553.90 382.05l1.8 1.9 1.8-1.9" fill="none" stroke="#fff" stroke-width=".9"/></svg>
<div class="t d" style="left:414.5px;top:376.2px;font-size:9.8px;line-height:9.8px;color:#222;transform:scaleX(0.9180);transform-origin:0 0;">Cut</div>
<div class="t d" style="left:343.6px;top:396.9px;font-size:9.8px;line-height:9.8px;color:#262626;transform:scaleX(0.9470);transform-origin:0 0;">Preset:</div>
<div class="a" style="left:380.9px;top:395.4px;width:180.9px;height:12.9px;background:#fff;border-radius:3.5px;box-shadow:0 .5px 1.2px rgba(0,0,0,.3),0 0 0 .3px rgba(0,0,0,.12)"></div>
<div class="a" style="left:550.6px;top:396.6px;width:10.2px;height:10.5px;background:#1f7bf6;border-radius:3px"></div>
<svg style="left:0;top:0" width="1150" height="648"><path d="M553.90 400.85l1.8-1.9 1.8 1.9M553.90 402.85l1.8 1.9 1.8-1.9" fill="none" stroke="#fff" stroke-width=".9"/></svg>
<div class="t d" style="left:385.7px;top:396.9px;font-size:9.8px;line-height:9.8px;color:#222;transform:scaleX(0.9511);transform-origin:0 0;">&lt; Custom Cut Preset &gt;</div>
<div class="a" style="left:570.3px;top:392.5px;width:18.7px;height:18.3px;background:#efefef;border:1px solid #c2c2c2;border-radius:1px"></div>
<svg style="left:0;top:0" width="1150" height="648"><path d="M575.65 401.65h8M579.65 397.65v8" stroke="#333" stroke-width="1.5"/></svg>
<div class="t d" style="left:364.6px;top:423.4px;font-size:9.8px;line-height:9.8px;color:#262626;transform:scaleX(0.9402);transform-origin:0 0;">Holder:</div>
<div class="a" style="left:405.7px;top:422.2px;width:156.1px;height:12.2px;background:#fff;border-radius:3.5px;box-shadow:0 .5px 1.2px rgba(0,0,0,.3),0 0 0 .3px rgba(0,0,0,.12)"></div>
<div class="a" style="left:550.6px;top:423.4px;width:10.2px;height:9.8px;background:#1f7bf6;border-radius:3px"></div>
<svg style="left:0;top:0" width="1150" height="648"><path d="M553.90 427.30l1.8-1.9 1.8 1.9M553.90 429.30l1.8 1.9 1.8-1.9" fill="none" stroke="#fff" stroke-width=".9"/></svg>
<div class="t d" style="left:410.5px;top:423.4px;font-size:9.8px;line-height:9.8px;color:#222;transform:scaleX(0.9440);transform-origin:0 0;">Blade (0.30 mm, 1.00 mm)</div>
<div class="a" style="left:570.3px;top:418.6px;width:18.7px;height:19px;background:#efefef;border:1px solid #c2c2c2;border-radius:1px"></div>
<svg style="left:0;top:0" width="1150" height="648"><path d="M575.65 428.10h8M579.65 424.10v8" stroke="#333" stroke-width="1.5"/></svg>
<div class="a" style="left:405.7px;top:442.9px;width:156.1px;height:12.2px;background:#fff;border-radius:3.5px;box-shadow:0 .5px 1.2px rgba(0,0,0,.3),0 0 0 .3px rgba(0,0,0,.12)"></div>
<div class="a" style="left:550.6px;top:444.1px;width:10.2px;height:9.8px;background:#1f7bf6;border-radius:3px"></div>
<svg style="left:0;top:0" width="1150" height="648"><path d="M553.90 448.00l1.8-1.9 1.8 1.9M553.90 450.00l1.8 1.9 1.8-1.9" fill="none" stroke="#fff" stroke-width=".9"/></svg>
<div class="t d" style="left:410.5px;top:444px;font-size:9.8px;line-height:9.8px;color:#222;transform:scaleX(0.9736);transform-origin:0 0;">Cut cut lines</div>
<div class="t d" style="left:344.5px;top:464.5px;font-size:9.8px;line-height:9.8px;color:#262626;transform:scaleX(0.9598);transform-origin:0 0;">Blade Offset:</div>
<div class="a" style="left:407.6px;top:463.9px;width:66.8px;height:12.8px;background:#fff;box-shadow:0 0 0 .5px #c4c4c4"></div>
<div class="t d" style="left:410.6px;top:465.7px;font-size:9.8px;line-height:9.8px;color:#222;transform:scaleX(0.9496);transform-origin:0 0;">0.30 mm</div>
<div class="a" style="left:480.8px;top:462px;width:10.3px;height:15.8px;background:#fff;border-radius:3px;box-shadow:0 .5px 1px rgba(0,0,0,.3)"></div>
<svg style="left:0;top:0" width="1150" height="648"><path d="M483.65 467.70l2.3-2.4 2.3 2.4M483.65 472.10l2.3 2.4 2.3-2.4" fill="none" stroke="#222" stroke-width="1.1"/></svg>
<div class="t d" style="left:505.9px;top:464.5px;font-size:9.8px;line-height:9.8px;color:#262626;transform:scaleX(0.9533);transform-origin:0 0;">Overcut:</div>
<div class="a" style="left:549.5px;top:463.9px;width:66.3px;height:12.8px;background:#fff;box-shadow:0 0 0 .5px #c4c4c4"></div>
<div class="t d" style="left:551.6px;top:465.7px;font-size:9.8px;line-height:9.8px;color:#222;transform:scaleX(0.9391);transform-origin:0 0;">1.00 mm</div>
<div class="a" style="left:622.4px;top:462px;width:9.8px;height:15.8px;background:#fff;border-radius:3px;box-shadow:0 .5px 1px rgba(0,0,0,.3)"></div>
<svg style="left:0;top:0" width="1150" height="648"><path d="M625.00 467.70l2.3-2.4 2.3 2.4M625.00 472.10l2.3 2.4 2.3-2.4" fill="none" stroke="#222" stroke-width="1.1"/></svg>
<div class="t d" style="left:357px;top:486.2px;font-size:9.8px;line-height:9.8px;color:#262626;transform:scaleX(0.9946);transform-origin:0 0;">Multi-Cut:</div>
<div class="a" style="left:405.7px;top:485px;width:80.4px;height:12.6px;background:#fff;border-radius:3.5px;box-shadow:0 .5px 1.2px rgba(0,0,0,.3),0 0 0 .3px rgba(0,0,0,.12)"></div>
<div class="a" style="left:474.9px;top:486.2px;width:10.2px;height:10.2px;background:#1f7bf6;border-radius:3px"></div>
<svg style="left:0;top:0" width="1150" height="648"><path d="M478.20 490.30l1.8-1.9 1.8 1.9M478.20 492.30l1.8 1.9 1.8-1.9" fill="none" stroke="#fff" stroke-width=".9"/></svg>
<div class="t d" style="left:410.5px;top:486.7px;font-size:9.8px;line-height:9.8px;color:#222;transform:scaleX(1.0473);transform-origin:0 0;">Off</div>
<div class="t d" style="left:372px;top:507.1px;font-size:9.8px;line-height:9.8px;color:#262626;transform:scaleX(0.9614);transform-origin:0 0;">Force:</div>
<div class="a" style="left:405.7px;top:511.4px;width:155px;height:3px;background:#cdcdcd;border-radius:1.5px"></div>
<div class="a" style="left:405.7px;top:511.4px;width:8.9px;height:3px;background:#1f7bf6;border-radius:1.5px"></div>
<div class="a" style="left:408.8px;top:507.1px;width:11.6px;height:11.6px;background:#fff;border-radius:50%;box-shadow:0 .5px 1.5px rgba(0,0,0,.35),0 0 0 .3px rgba(0,0,0,.15)"></div>
<div class="a" style="left:566.2px;top:506.1px;width:9.8px;height:13px;background:#fff;border-radius:3px;box-shadow:0 .5px 1px rgba(0,0,0,.3)"></div>
<svg style="left:0;top:0" width="1150" height="648"><path d="M568.80 510.40l2.3-2.4 2.3 2.4M568.80 514.80l2.3 2.4 2.3-2.4" fill="none" stroke="#222" stroke-width="1.1"/></svg>
<div class="t d" style="left:583.8px;top:507.3px;font-size:9.8px;line-height:9.8px;color:#222;">10</div>
<div class="t d" style="left:345px;top:525.2px;font-size:9.8px;line-height:9.8px;color:#262626;transform:scaleX(0.9573);transform-origin:0 0;">Score Force:</div>
<div class="a" style="left:405.7px;top:529.5px;width:155px;height:3px;background:#cdcdcd;border-radius:1.5px"></div>
<div class="a" style="left:405.7px;top:529.5px;width:7.8px;height:3px;background:#1f7bf6;border-radius:1.5px"></div>
<div class="a" style="left:407.7px;top:525.2px;width:11.6px;height:11.6px;background:#fff;border-radius:50%;box-shadow:0 .5px 1.5px rgba(0,0,0,.35),0 0 0 .3px rgba(0,0,0,.15)"></div>
<div class="a" style="left:566.2px;top:524.2px;width:9.8px;height:13px;background:#fff;border-radius:3px;box-shadow:0 .5px 1px rgba(0,0,0,.3)"></div>
<svg style="left:0;top:0" width="1150" height="648"><path d="M568.80 528.50l2.3-2.4 2.3 2.4M568.80 532.90l2.3 2.4 2.3-2.4" fill="none" stroke="#222" stroke-width="1.1"/></svg>
<div class="t d" style="left:583.8px;top:525.4px;font-size:9.8px;line-height:9.8px;color:#222;">5</div>
<div class="t d" style="left:369.2px;top:543.2px;font-size:9.8px;line-height:9.8px;color:#262626;transform:scaleX(0.9498);transform-origin:0 0;">Speed:</div>
<div class="a" style="left:405.7px;top:547.5px;width:155px;height:3px;background:#cdcdcd;border-radius:1.5px"></div>
<div class="a" style="left:405.7px;top:547.5px;width:51.5px;height:3px;background:#1f7bf6;border-radius:1.5px"></div>
<div class="a" style="left:451.4px;top:543.2px;width:11.6px;height:11.6px;background:#fff;border-radius:50%;box-shadow:0 .5px 1.5px rgba(0,0,0,.35),0 0 0 .3px rgba(0,0,0,.15)"></div>
<div class="a" style="left:566.2px;top:542.2px;width:9.8px;height:13px;background:#fff;border-radius:3px;box-shadow:0 .5px 1px rgba(0,0,0,.3)"></div>
<svg style="left:0;top:0" width="1150" height="648"><path d="M568.80 546.50l2.3-2.4 2.3 2.4M568.80 550.90l2.3 2.4 2.3-2.4" fill="none" stroke="#222" stroke-width="1.1"/></svg>
<div class="t d" style="left:583.8px;top:543.4px;font-size:9.8px;line-height:9.8px;color:#222;">20</div>
<div class="a" style="left:317px;top:596.6px;width:55.5px;height:12.9px;background:#fff;border-radius:3.5px;box-shadow:0 .5px 1.2px rgba(0,0,0,.3),0 0 0 .3px rgba(0,0,0,.12)"></div>
<div class="t d" style="left:324.5px;top:598.15px;font-size:9.8px;line-height:9.8px;color:#222;transform:scaleX(0.9848);transform-origin:0 0;">Print+Cut</div>
<div class="a" style="left:383px;top:596.6px;width:71.1px;height:12.9px;background:#fff;border-radius:3.5px;box-shadow:0 .5px 1.2px rgba(0,0,0,.3),0 0 0 .3px rgba(0,0,0,.12)"></div>
<div class="t d" style="left:395px;top:598.15px;font-size:9.8px;line-height:9.8px;color:#222;transform:scaleX(0.9591);transform-origin:0 0;">Save to file</div>
<div class="a" style="left:521.9px;top:596.6px;width:55.5px;height:12.9px;background:#fff;border-radius:3.5px;box-shadow:0 .5px 1.2px rgba(0,0,0,.3),0 0 0 .3px rgba(0,0,0,.12)"></div>
<div class="t d" style="left:535px;top:598.15px;font-size:9.8px;line-height:9.8px;color:#222;transform:scaleX(0.9015);transform-origin:0 0;">Cancel</div>
<div class="a" style="left:586.1px;top:596.6px;width:55.5px;height:12.9px;background:linear-gradient(#2e8bfa,#1673f4);border-radius:3.5px;box-shadow:0 .5px 1px rgba(0,0,0,.25)"></div>
<div class="t d" style="left:606.5px;top:598.15px;font-size:9.8px;line-height:9.8px;color:#fff;transform:scaleX(0.9180);transform-origin:0 0;">Cut</div>
<div class="a" style="left:651.3px;top:145px;width:93.2px;height:23.3px;background:#f3f3f3;border:1px solid #c6c6c6"></div>
<div class="a" style="left:674.5px;top:145.5px;width:1px;height:22.5px;background:#cfcfcf"></div>
<div class="a" style="left:697.7px;top:145.5px;width:1px;height:22.5px;background:#cfcfcf"></div>
<div class="a" style="left:721px;top:145.5px;width:1px;height:22.5px;background:#cfcfcf"></div>
<svg style="left:0;top:0" width="1150" height="648"><g fill="none" stroke="#111" stroke-width="1.2">
<circle cx="662.3" cy="155.9" r="4.9"/><circle cx="685.5" cy="155.9" r="4.9"/><circle cx="708.7" cy="155.9" r="4.9"/><circle cx="732" cy="155.9" r="4.9"/>
</g><g stroke="#111" stroke-width="2.2" stroke-linecap="round">
<path d="M666.2 159.8l2.7 2.6M689.4 159.8l2.7 2.6M712.6 159.8l2.7 2.6M735.9 159.8l2.7 2.6"/></g>
<path d="M659.8 155.9h5M662.3 153.4v5M683 155.9h5" stroke="#111" stroke-width="1.5"/>
<path d="M706 153.5l1.2 0M711.4 153.5l-1.2 0M706 158.3h1.2M711.4 158.3h-1.2" stroke="#111" stroke-width="1"/>
<path d="M729.8 152.8h3.2l1.3 1.3v4.3h-4.5z" fill="#fff" stroke="#111" stroke-width=".9"/>
</svg>
<div class="a" style="left:762px;top:149.9px;width:52.9px;height:12.7px;background:#fff;border-radius:3.5px;box-shadow:0 .5px 1.2px rgba(0,0,0,.3),0 0 0 .3px rgba(0,0,0,.12)"></div>
<div class="t" style="left:769.5px;top:151.35px;font-size:9.8px;line-height:9.8px;color:#222;transform:scaleX(0.9425);transform-origin:0 0;">Cut order</div>
<div class="a" style="left:651.4px;top:174.8px;width:181.9px;height:401px;background:#777777;border:1px solid #555"></div>
<div class="a" style="left:652px;top:175.5px;width:181px;height:12.8px;background:#e2e2e2;border-bottom:1.5px solid #222"></div>
<div class="a" style="left:652px;top:175.5px;width:12.5px;height:400px;background:#e2e2e2;border-right:1.5px solid #333"></div>
<div class="a" style="left:652px;top:175.5px;width:12.5px;height:12.8px;background:#e2e2e2;border-right:1.5px solid #555;border-bottom:1.5px solid #222"></div>
<svg style="left:0;top:0" width="1150" height="648"><g font-family="Liberation Sans" fill="#111"><text x="677.2" y="184.2" font-size="6.3" text-anchor="middle">0</text><text x="683.1" y="184.2" font-size="6.3" text-anchor="middle">1</text><text x="688.9" y="184.2" font-size="6.3" text-anchor="middle">2</text><text x="694.8" y="184.2" font-size="6.3" text-anchor="middle">3</text><text x="700.6" y="184.2" font-size="6.3" text-anchor="middle">4</text><text x="706.5" y="184.2" font-size="6.3" text-anchor="middle">5</text><text x="712.3" y="184.2" font-size="6.3" text-anchor="middle">6</text><text x="718.2" y="184.2" font-size="6.3" text-anchor="middle">7</text><text x="724.0" y="184.2" font-size="6.3" text-anchor="middle">8</text><text x="729.9" y="184.2" font-size="6.3" text-anchor="middle">9</text><text x="735.7" y="184.2" font-size="6.3" text-anchor="middle">10</text><text x="741.6" y="184.2" font-size="6.3" text-anchor="middle">11</text><text x="747.4" y="184.2" font-size="6.3" text-anchor="middle">12</text><text x="753.2" y="184.2" font-size="6.3" text-anchor="middle">13</text><text x="759.1" y="184.2" font-size="6.3" text-anchor="middle">14</text><text x="765.0" y="184.2" font-size="6.3" text-anchor="middle">15</text><text x="770.8" y="184.2" font-size="6.3" text-anchor="middle">16</text><text x="776.7" y="184.2" font-size="6.3" text-anchor="middle">17</text><text x="782.5" y="184.2" font-size="6.3" text-anchor="middle">18</text><text x="788.4" y="184.2" font-size="6.3" text-anchor="middle">19</text><text x="794.2" y="184.2" font-size="6.3" text-anchor="middle">20</text><text x="800.1" y="184.2" font-size="6.3" text-anchor="middle">21</text><text x="805.9" y="184.2" font-size="6.3" text-anchor="middle">22</text><text x="657.5" y="194.3" font-size="6.3" text-anchor="middle">0</text><text x="657.5" y="199.9" font-size="6.3" text-anchor="middle">1</text><text x="657.5" y="205.5" font-size="6.3" text-anchor="middle">2</text><text x="657.5" y="211.1" font-size="6.3" text-anchor="middle">3</text><text x="657.5" y="216.7" font-size="6.3" text-anchor="middle">4</text><text x="657.5" y="222.3" font-size="6.3" text-anchor="middle">5</text><text x="657.5" y="227.9" font-size="6.3" text-anchor="middle">6</text><text x="657.5" y="233.5" font-size="6.3" text-anchor="middle">7</text></g><g stroke="#111" stroke-width="1"><path d="M677.20 184.8V187.5"/><path d="M683.05 184.8V187.5"/><path d="M688.90 184.8V187.5"/><path d="M694.75 184.8V187.5"/><path d="M700.60 184.8V187.5"/><path d="M706.45 184.8V187.5"/><path d="M712.30 184.8V187.5"/><path d="M718.15 184.8V187.5"/><path d="M724.00 184.8V187.5"/><path d="M729.85 184.8V187.5"/><path d="M735.70 184.8V187.5"/><path d="M741.55 184.8V187.5"/><path d="M747.40 184.8V187.5"/><path d="M753.25 184.8V187.5"/><path d="M759.10 184.8V187.5"/><path d="M764.95 184.8V187.5"/><path d="M770.80 184.8V187.5"/><path d="M776.65 184.8V187.5"/><path d="M782.50 184.8V187.5"/><path d="M788.35 184.8V187.5"/><path d="M794.20 184.8V187.5"/><path d="M800.05 184.8V187.5"/><path d="M805.90 184.8V187.5"/><path d="M660.50 191.90H664"/><path d="M660.50 197.50H664"/><path d="M660.50 203.10H664"/><path d="M660.50 208.70H664"/><path d="M660.50 214.30H664"/><path d="M660.50 219.90H664"/><path d="M660.50 225.50H664"/><path d="M660.50 231.10H664"/></g></svg>
<svg style="left:0;top:0" width="1150" height="648">
<rect x="667" y="225.4" width="158.6" height="34.7" rx="3" fill="#222"/>
<rect x="672" y="234.5" width="149" height="25" fill="#0c0c0c"/>
<path d="M672 246.2h149M672 250.6h149M672 255.1h149" stroke="#333" stroke-width="1.4"/>
<rect x="667" y="225.9" width="10" height="34" rx="4" fill="#2c2c2c"/>
<rect x="816" y="225.9" width="9.6" height="34" rx="4" fill="#2c2c2c"/>
<rect x="678.9" y="191" width="124.4" height="38.1" fill="#fff"/>
<rect x="678.9" y="229.1" width="124.4" height="6.5" fill="#b4b4b4"/>
<path transform="translate(701.3,197.6) scale(0.1116)" d="M73 35C70 14 56 0 38 0C16 0 0 16 0 38C0 52 9.4 66.4 20 80L73 148L126 80C136.6 66.4 146 52 146 38C146 16 130 0 108 0C90 0 76 14 73 35Z" fill="#000"/>
<path transform="translate(702,216) scale(0.106)" d="M73 35C70 14 56 0 38 0C16 0 0 16 0 38C0 52 9.4 66.4 20 80L73 148L126 80C136.6 66.4 146 52 146 38C146 16 130 0 108 0C90 0 76 14 73 35Z" fill="none" stroke="#444" stroke-width="10"/>
<text x="722" y="213.8" font-family="Liberation Sans" font-weight="bold" font-size="22.4" fill="#000" stroke="#000" stroke-width=".7" textLength="39.6" lengthAdjust="spacingAndGlyphs">PEACH</text>
<text x="722" y="231.7" font-family="Liberation Sans" font-weight="bold" font-size="22.4" fill="#8c8c8c" stroke="#8c8c8c" stroke-width=".7" textLength="39.6" lengthAdjust="spacingAndGlyphs">PEACH</text>
<path d="M775.3 196L768 200.9L766.3 209.3L771.2 209.7C770.6 218 770.4 226 770.4 233.8H789.7C789.7 226 788.6 218 787.7 209.7L793.7 208.5L792.1 200.1L784.1 196" fill="none" stroke="#888" stroke-width=".9"/>
<rect x="774" y="202" width="12.1" height="4.9" fill="#7a7a7a"/>
<path transform="rotate(-15 780 213)" d="M780 210.5c-1-2-4.4-2-4.4.8 0 2.3 2.8 4.2 4.4 6 1.6-1.8 4.4-3.7 4.4-6 0-2.8-3.4-2.8-4.4-.8z" fill="none" stroke="#777" stroke-width="1"/>
<path d="M792.9 231h9.7l5.4 2.6-5.4 2.6h-9.7z" fill="#a58fb5" opacity=".75"/>
</svg>
<svg style="left:0;top:0" width="1150" height="648"><path d="M910.1 576.1v12.4l3-2.7 2.2 4.8 2.3-1-2.1-4.6 4-.3z" fill="#000" stroke="#fff" stroke-width="1" stroke-linejoin="round"/></svg>
</body></html>
